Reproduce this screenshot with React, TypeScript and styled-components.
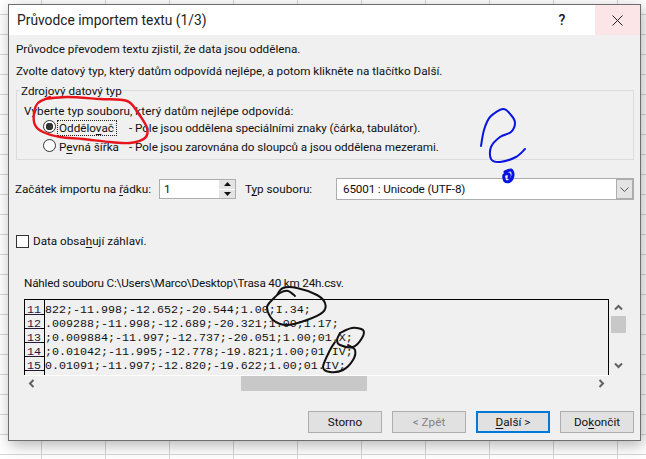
import React from "react";
import styled, { createGlobalStyle } from "styled-components";

const rows = [
  { no: 11, text: "822;-11.998;-12.652;-20.544;1.00;I.34;" },
  { no: 12, text: ".009288;-11.998;-12.689;-20.321;1.00;1.17;" },
  { no: 13, text: ";0.009884;-11.997;-12.737;-20.051;1.00;01.X;" },
  { no: 14, text: ";0.01042;-11.995;-12.778;-19.821;1.00;01.IV;" },
  { no: 15, text: "0.01091;-11.997;-12.820;-19.622;1.00;01.IV;" },
];

// pen scribbles drawn over the screenshot
const scribbles: { color: string; width: number; points: number[][] }[] = [
  {
    color: "#e8141c",
    width: 2.4,
    points: [[45, 99], [67, 97], [100, 99], [127, 101], [138, 113], [147, 128], [145, 138], [130, 143], [110, 142], [83, 139], [60, 137], [43, 132], [35, 125], [34, 113], [38, 103], [50, 97]],
  },
  {
    color: "#0a14e0",
    width: 2,
    points: [[481, 146], [484, 130], [490, 117], [503, 109], [511, 115], [515, 123], [511, 132], [500, 137], [491, 147], [491, 159], [500, 162], [516, 157], [525, 149]],
  },
  {
    color: "#0a14e0",
    width: 3,
    points: [[505, 172], [511, 170], [513, 175], [510, 181], [505, 181], [504, 175], [509, 174], [509, 178]],
  },
  {
    color: "#111",
    width: 2,
    points: [[295, 296], [288, 291], [280, 293], [272, 300], [267, 308], [273, 320], [287, 325], [307, 320], [323, 312], [325, 303], [317, 295], [297, 288], [283, 288], [277, 295]],
  },
  {
    color: "#111",
    width: 2,
    points: [[340, 333], [352, 328], [363, 330], [362, 338], [353, 347], [340, 345], [337, 340], [340, 333]],
  },
  {
    color: "#111",
    width: 2,
    points: [[335, 342], [330, 350], [323, 367], [330, 372], [343, 370], [353, 360], [355, 350], [348, 345]],
  },
];

// catmull-rom through the points, so the line really passes where the pen went
function smooth(points: number[][]) {
  let d = `M${points[0][0]} ${points[0][1]}`;
  for (let i = 0; i < points.length - 1; i++) {
    const p0 = points[Math.max(i - 1, 0)];
    const p1 = points[i];
    const p2 = points[i + 1];
    const p3 = points[Math.min(i + 2, points.length - 1)];
    const c1x = p1[0] + (p2[0] - p0[0]) / 6;
    const c1y = p1[1] + (p2[1] - p0[1]) / 6;
    const c2x = p2[0] - (p3[0] - p1[0]) / 6;
    const c2y = p2[1] - (p3[1] - p1[1]) / 6;
    d += ` C${c1x} ${c1y} ${c2x} ${c2y} ${p2[0]} ${p2[1]}`;
  }
  return d;
}

export default function App() {
  return (
    <Desktop>
      <GlobalStyle />
      <Dialog>
        <TitleBar>
          <Title>Průvodce importem textu (1/3)</Title>
          <HelpButton>?</HelpButton>
          <CloseButton>
            <svg width="11" height="11" viewBox="0 0 11 11">
              <path d="M0.5 0.5L10.5 10.5M10.5 0.5L0.5 10.5" stroke="#222" fill="none" />
            </svg>
          </CloseButton>
        </TitleBar>
        <Body>
          <Line>Průvodce převodem textu zjistil, že data jsou oddělena.</Line>
          <Line $top={8}>Zvolte datový typ, který datům odpovídá nejlépe, a potom klikněte na tlačítko Další.</Line>
          <Group>
            <Legend>Zdrojový datový typ</Legend>
            <GroupPrompt>Vyberte typ souboru, který datům nejlépe odpovídá:</GroupPrompt>
            <RadioRow>
              <Radio $checked />
              <RadioLabel $focused>Oddělo<u>v</u>ač</RadioLabel>
              <RadioHint>- Pole jsou oddělena speciálními znaky (čárka, tabulátor).</RadioHint>
            </RadioRow>
            <RadioRow>
              <Radio />
              <RadioLabel>P<u>e</u>vná šířka</RadioLabel>
              <RadioHint>- Pole jsou zarovnána do sloupců a jsou oddělena mezerami.</RadioHint>
            </RadioRow>
          </Group>
          <FieldRow>
            <StartLabel>Začátek importu na <u>ř</u>ádku:</StartLabel>
            <Spin>
              <SpinValue>1</SpinValue>
              <SpinButtons>
                <SpinButton>
                  <svg width="7" height="4" viewBox="0 0 7 4"><path d="M3.5 0L7 4H0z" fill="#111" /></svg>
                </SpinButton>
                <SpinButton>
                  <svg width="7" height="4" viewBox="0 0 7 4"><path d="M0 0H7L3.5 4z" fill="#111" /></svg>
                </SpinButton>
              </SpinButtons>
            </Spin>
            <TypeLabel>T<u>y</u>p souboru:</TypeLabel>
            <Select>
              <SelectValue>65001 : Unicode (UTF-8)</SelectValue>
              <SelectArrow>
                <svg width="9" height="5" viewBox="0 0 9 5"><path d="M0.5 0.5L4.5 4.5L8.5 0.5" stroke="#555" fill="none" /></svg>
              </SelectArrow>
            </Select>
          </FieldRow>
          <CheckRow>
            <CheckBox />
            <span>Data obsa<u>h</u>ují záhlaví.</span>
          </CheckRow>
          <PreviewLabel>Náhled souboru C:\Users\Marco\Desktop\Trasa 40 km 24h.csv.</PreviewLabel>
          <PreviewArea>
            <PreviewColumn>
              <Preview>
                {rows.map((row) => (
                  <PreviewRow key={row.no}>
                    <RowNo>{row.no}</RowNo>
                    <RowText>{row.text}</RowText>
                  </PreviewRow>
                ))}
                <PreviewTail />
              </Preview>
              <HScroll>
                <svg width="7" height="9" viewBox="0 0 7 9"><path d="M5.5 1L2 4.5L5.5 8" stroke="#606060" strokeWidth="2" fill="none" /></svg>
                <HThumbTrack><HThumb /></HThumbTrack>
                <svg width="7" height="9" viewBox="0 0 7 9"><path d="M1.5 1L5 4.5L1.5 8" stroke="#606060" strokeWidth="2" fill="none" /></svg>
              </HScroll>
            </PreviewColumn>
            <VScroll>
              <svg width="9" height="7" viewBox="0 0 9 7"><path d="M1 5.5L4.5 2L8 5.5" stroke="#606060" strokeWidth="2" fill="none" /></svg>
              <VThumb />
              <svg width="9" height="7" viewBox="0 0 9 7"><path d="M1 1.5L4.5 5L8 1.5" stroke="#606060" strokeWidth="2" fill="none" /></svg>
            </VScroll>
          </PreviewArea>
          <Buttons>
            <Button>Storno</Button>
            <Button $disabled>&lt; Zpět</Button>
            <Button $primary><u>D</u>alší &gt;</Button>
            <Button>Do<u>k</u>ončit</Button>
          </Buttons>
        </Body>
      </Dialog>
      <Scribbles width="646" height="459" viewBox="0 0 646 459">
        {scribbles.map((s, i) => (
          <path key={i} d={smooth(s.points)} stroke={s.color} strokeWidth={s.width} fill="none" strokeLinecap="round" strokeLinejoin="round" />
        ))}
      </Scribbles>
    </Desktop>
  );
}

const GlobalStyle = createGlobalStyle`
  html, body {
    margin: 0;
    padding: 0;
    overflow: hidden;
  }
  body {
    font-family: Roboto, "Noto Sans", sans-serif;
    font-size: 11.7px;
    color: #111;
  }
  u {
    text-underline-offset: 2px;
  }
`;

const Desktop = styled.div`
  position: relative;
  width: 646px;
  height: 459px;
  padding: 4px 0 0 8px;
  box-sizing: border-box;
  background-color: #fff;
  background-image:
    linear-gradient(to right, #d6d6d6 1px, transparent 1px),
    linear-gradient(to bottom, #d6d6d6 1px, transparent 1px);
  background-size: 64px 20px;
  background-position: 41px 14px;
`;

const Dialog = styled.div`
  display: flex;
  flex-direction: column;
  width: 633px;
  height: 437px;
  box-sizing: border-box;
  background: #f0f0f0;
  border: 1px solid #6e6e6e;
  box-shadow: 2px 4px 14px rgba(0, 0, 0, 0.3);
`;

const TitleBar = styled.div`
  display: flex;
  align-items: center;
  flex: none;
  height: 30px;
  padding-left: 8px;
  background: #fff;
`;

const Title = styled.div`
  flex: 1;
  font-size: 13.8px;
  color: #222;
`;

const HelpButton = styled.div`
  width: 22px;
  margin-right: 22px;
  font-size: 14px;
  font-weight: 500;
  text-align: center;
`;

const CloseButton = styled.div`
  display: flex;
  align-items: center;
  justify-content: center;
  width: 45px;
  height: 30px;
  background: #fbe5e6;
`;

const Body = styled.div`
  display: flex;
  flex-direction: column;
  flex: 1;
  padding: 7px 6px 7px 7px;
`;

const Line = styled.div<{ $top?: number }>`
  height: 14px;
  line-height: 14px;
  margin-top: ${({ $top }) => $top ?? 0}px;
  white-space: nowrap;
`;

const Group = styled.div`
  position: relative;
  height: 70px;
  margin-top: 12px;
  padding: 13px 0 0 7px;
  box-sizing: border-box;
  border: 1px solid #dcdcdc;
`;

const Legend = styled.div`
  position: absolute;
  top: -7px;
  left: 3px;
  padding: 0 1px;
  line-height: 14px;
  background: #f0f0f0;
`;

const GroupPrompt = styled.div`
  line-height: 14px;
  letter-spacing: 0.08px;
`;

const RadioRow = styled.div`
  display: flex;
  align-items: center;
  height: 19px;
  padding-left: 19px;
`;

const Radio = styled.div<{ $checked?: boolean }>`
  position: relative;
  flex: none;
  width: 13px;
  height: 13px;
  margin-top: -2px;
  box-sizing: border-box;
  border: 1px solid #333;
  border-radius: 50%;
  background: ${({ $checked }) =>
    $checked ? "radial-gradient(circle, #333 3.5px, #fff 4px)" : "#fff"};
`;

const RadioLabel = styled.div<{ $focused?: boolean }>`
  flex: none;
  width: 58px;
  margin-left: 2px;
  padding-left: 1px;
  box-sizing: border-box;
  line-height: 14px;
  white-space: nowrap;
  outline: ${({ $focused }) => ($focused ? "1px dotted #222" : "none")};
`;

const RadioHint = styled.div`
  margin-left: 13px;
  letter-spacing: -0.06px;
  white-space: nowrap;
`;

const FieldRow = styled.div`
  display: flex;
  align-items: center;
  height: 22px;
  margin-top: 18px;
`;

const StartLabel = styled.div`
  width: 144px;
  margin-left: -1px;
  white-space: nowrap;
`;

const Spin = styled.div`
  display: flex;
  width: 77px;
  height: 20px;
  box-sizing: border-box;
  border: 1px solid #adadad;
  background: #fff;
`;

const SpinValue = styled.div`
  flex: 1;
  padding-left: 4px;
  line-height: 18px;
`;

const SpinButtons = styled.div`
  display: flex;
  flex-direction: column;
  gap: 1px;
  width: 16px;
`;

const SpinButton = styled.div`
  display: flex;
  align-items: center;
  justify-content: center;
  flex: 1;
  background: #e4e4e4;
`;

const TypeLabel = styled.div`
  width: 91px;
  margin-left: 9px;
  white-space: nowrap;
`;

const Select = styled.div`
  display: flex;
  width: 298px;
  height: 22px;
  box-sizing: border-box;
  border: 1px solid #adadad;
  background: #fff;
`;

const SelectValue = styled.div`
  flex: 1;
  padding-left: 6px;
  line-height: 20px;
  letter-spacing: -0.15px;
`;

const SelectArrow = styled.div`
  display: flex;
  align-items: center;
  justify-content: center;
  width: 15px;
  background: #e4e4e4;
  border: 1px solid #adadad;
`;

const CheckRow = styled.div`
  display: flex;
  align-items: center;
  gap: 4px;
  height: 14px;
  margin-top: 34px;
`;

const CheckBox = styled.div`
  width: 13px;
  height: 13px;
  box-sizing: border-box;
  border: 1px solid #333;
  background: #fff;
`;

const PreviewLabel = styled.div`
  height: 14px;
  line-height: 14px;
  margin-top: 28px;
  padding-left: 8px;
  letter-spacing: -0.19px;
  white-space: nowrap;
`;

const PreviewArea = styled.div`
  position: relative;
  display: flex;
  margin-top: 9px;
  padding-left: 8px;
`;

const PreviewColumn = styled.div`
  width: 585px;
`;

const Preview = styled.div`
  height: 76px;
  box-sizing: border-box;
  overflow: hidden;
  border: solid #000;
  border-width: 1px 1px 0 1px;
  box-shadow: 0 1px 0 #fff;
`;

const PreviewRow = styled.div`
  display: flex;
  height: 14px;
  font-family: "Liberation Mono", monospace;
  font-size: 11.67px;
  line-height: 19px;
  white-space: nowrap;
  &:first-child {
    height: 15px;
    line-height: 21px;
  }
`;

const RowNo = styled.div`
  flex: none;
  width: 20px;
  height: 100%;
  box-sizing: border-box;
  padding-left: 2px;
  border-right: 1px solid #000;
  border-bottom: 1px solid #000;
  text-decoration: underline;
  text-underline-offset: 1px;
  color: #2a1a3a;
`;

const RowText = styled.div`
  padding-left: 0;
`;

const PreviewTail = styled.div`
  width: 20px;
  height: 5px;
  box-sizing: border-box;
  border-right: 1px solid #000;
`;

const HScroll = styled.div`
  display: flex;
  align-items: center;
  justify-content: space-between;
  height: 15px;
  margin-top: 1px;
  padding: 0 4px;
`;

const HThumbTrack = styled.div`
  flex: 1;
  height: 15px;
  padding-left: 206px;
`;

const HThumb = styled.div`
  width: 126px;
  height: 15px;
  background: #c8c8c8;
`;

const VScroll = styled.div`
  display: flex;
  flex-direction: column;
  align-items: center;
  width: 15px;
  height: 76px;
  margin-left: 2px;
  padding-top: 5px;
  box-sizing: border-box;
  svg:last-child {
    margin-top: 29px;
  }
`;

const VThumb = styled.div`
  width: 15px;
  height: 17px;
  margin-top: 5px;
  background: #c8c8c8;
`;

const Buttons = styled.div`
  display: flex;
  justify-content: flex-end;
  gap: 10px;
  margin-top: 20px;
`;

const Button = styled.div<{ $disabled?: boolean; $primary?: boolean }>`
  display: flex;
  align-items: center;
  justify-content: center;
  width: 74px;
  height: 22px;
  box-sizing: border-box;
  background: #e1e1e1;
  border: ${({ $primary }) => ($primary ? "2px solid #0078d7" : "1px solid #adadad")};
  color: ${({ $disabled }) => ($disabled ? "#838383" : "#111")};
`;

const Scribbles = styled.svg`
  position: absolute;
  top: 0;
  left: 0;
  pointer-events: none;
`;
